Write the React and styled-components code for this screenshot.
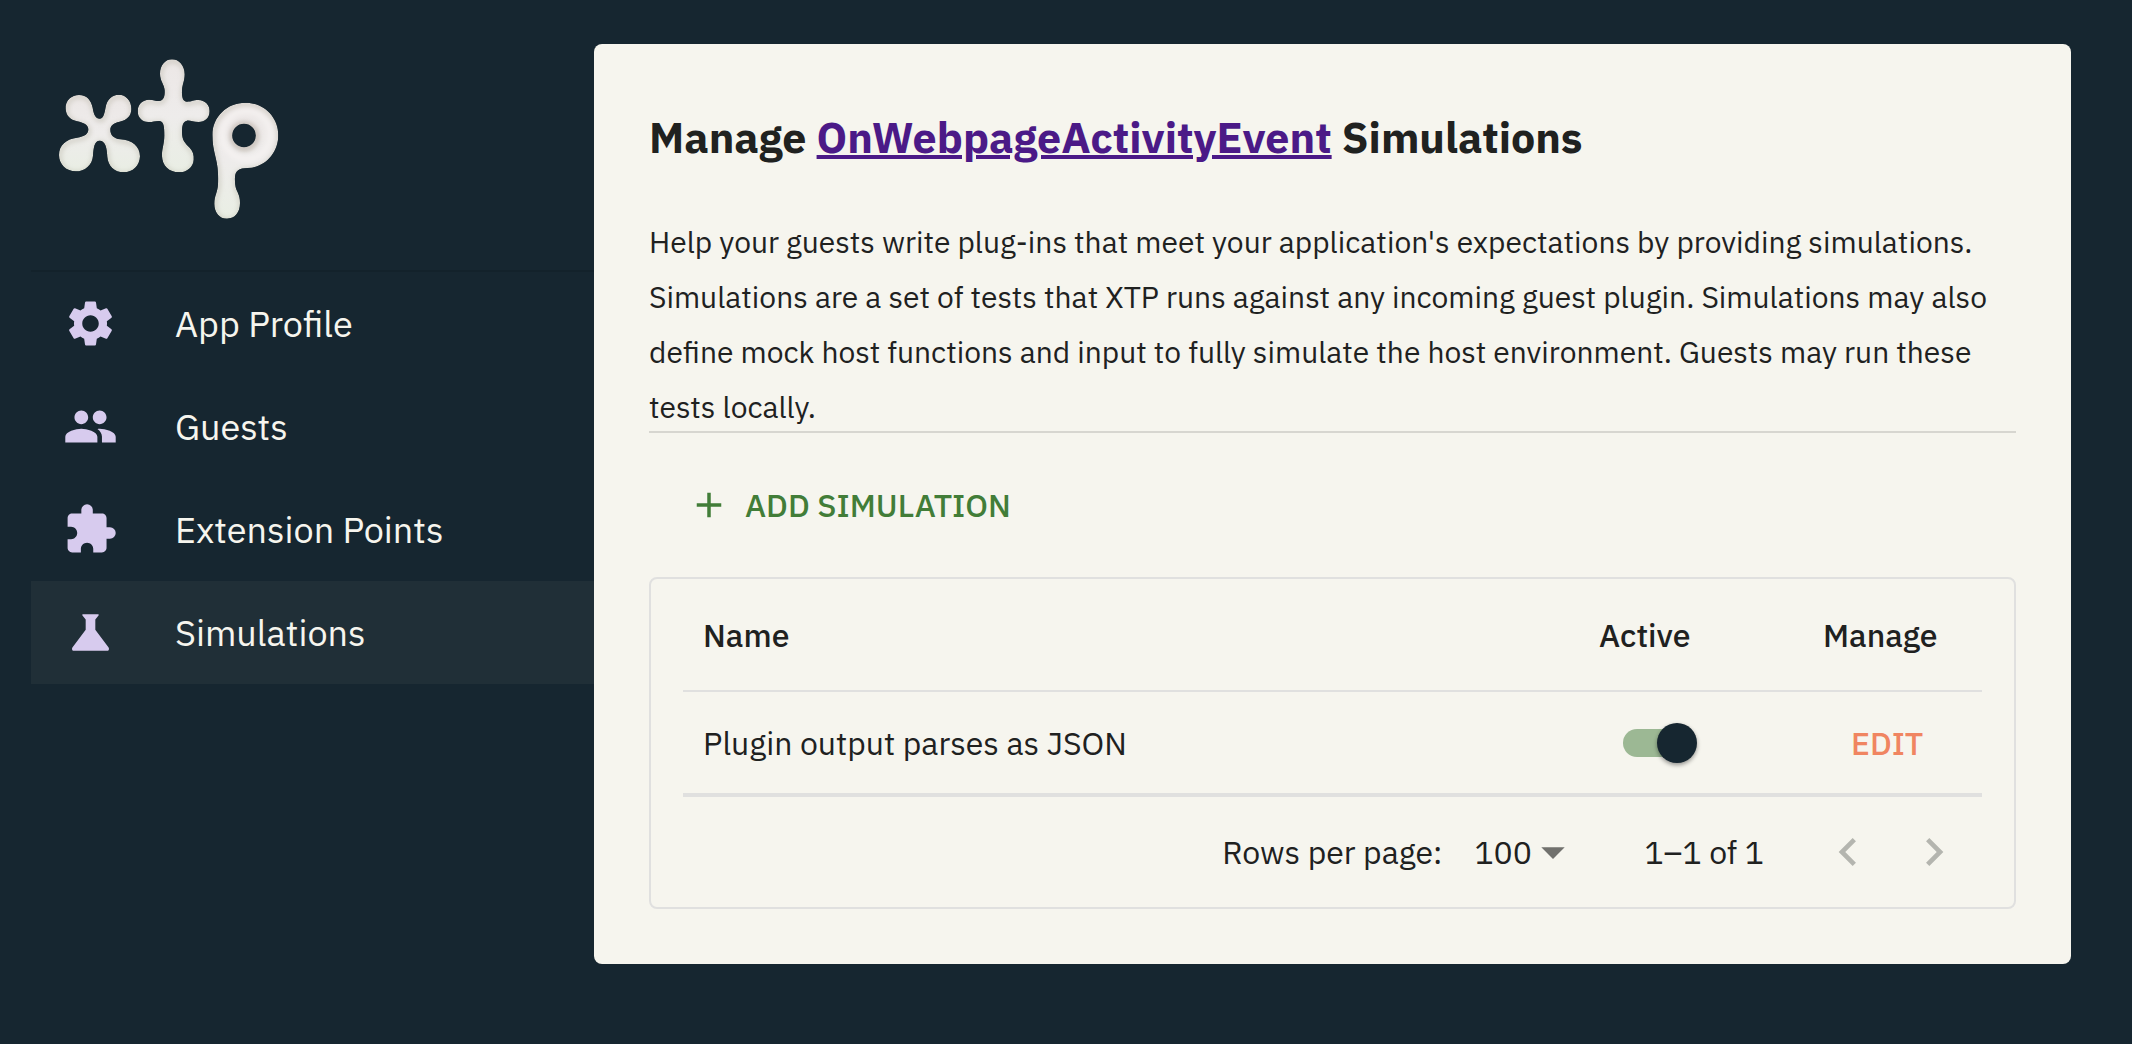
import { useState } from "react";
import styled, { createGlobalStyle } from "styled-components";
import {
  MdAdd,
  MdArrowDropDown,
  MdChevronLeft,
  MdChevronRight,
  MdExtension,
  MdPeople,
  MdSettings,
} from "react-icons/md";

const menu = [
  { label: "App Profile", icon: MdSettings },
  { label: "Guests", icon: MdPeople },
  { label: "Extension Points", icon: MdExtension },
  { label: "Simulations", icon: FlaskIcon, active: true },
];

const simulations = [{ id: 1, name: "Plugin output parses as JSON" }];

export default function App() {
  const [enabled, setEnabled] = useState({ 1: true });

  const handleToggle = (id) => {
    setEnabled({ ...enabled, [id]: !enabled[id] });
  };

  return (
    <>
      <GlobalStyle />
      <Page>
        <Sidebar>
          <LogoLink href="#home" aria-label="xtp">
            <Logo />
          </LogoLink>
          <Menu>
            {menu.map(({ label, icon: Icon, active }) => (
              <MenuLink key={label} href="#menu" $active={active}>
                <Icon size={55} />
                {label}
              </MenuLink>
            ))}
          </Menu>
        </Sidebar>
        <Panel>
          <Title>
            Manage <a href="#event">OnWebpageActivityEvent</a> Simulations
          </Title>
          <Intro>
            Help your guests write plug-ins that meet your application's
            expectations by providing simulations. Simulations are a set of
            tests that XTP runs against any incoming guest plugin. Simulations
            may also define mock host functions and input to fully simulate the
            host environment. Guests may run these tests locally.
          </Intro>
          <Divider />
          <AddButton type="button">
            <MdAdd size={42} />
            Add Simulation
          </AddButton>
          <TableCard>
            <Table>
              <thead>
                <tr>
                  <HeadCell>Name</HeadCell>
                  <HeadCell $width="224px">Active</HeadCell>
                  <HeadCell $width="179px">Manage</HeadCell>
                </tr>
              </thead>
              <tbody>
                {simulations.map(({ id, name }) => (
                  <tr key={id}>
                    <Cell>{name}</Cell>
                    <Cell>
                      <Switch
                        type="checkbox"
                        role="switch"
                        aria-label={name}
                        checked={enabled[id]}
                        onChange={() => handleToggle(id)}
                      />
                    </Cell>
                    <Cell>
                      <EditButton type="button">Edit</EditButton>
                    </Cell>
                  </tr>
                ))}
              </tbody>
            </Table>
            <Pagination>
              <label htmlFor="rows">Rows per page:</label>
              <SelectBox>
                <select id="rows" defaultValue="100">
                  <option>25</option>
                  <option>50</option>
                  <option>100</option>
                </select>
                <MdArrowDropDown size={56} />
              </SelectBox>
              <Count>1–1 of 1</Count>
              <PageButton type="button" disabled aria-label="Previous page">
                <MdChevronLeft size={56} />
              </PageButton>
              <PageButton type="button" disabled aria-label="Next page">
                <MdChevronRight size={56} />
              </PageButton>
            </Pagination>
          </TableCard>
        </Panel>
      </Page>
    </>
  );
}

function FlaskIcon({ size }) {
  return (
    <svg width={size} height={size} viewBox="0 0 24 24" fill="currentColor">
      <path d="M8.8 4H15.2C15.6 4 15.7 4.3 15.5 4.6L14.1 6.3V10.8L19.9 18.5C20.3 19.2 20 20 19.2 20H4.8C4 20 3.7 19.2 4.1 18.5L9.9 10.8V6.3L8.5 4.6C8.3 4.3 8.4 4 8.8 4Z" />
    </svg>
  );
}

const shapes = [
  "M106 206C104 180 124 164 146 164C170 164 182 180 187 202C190 222 196 235 208 235C220 235 222 220 226 200C230 178 245 163 265 163C287 163 304 182 303 206C303 228 288 240 268 244C250 248 240 256 240 268C240 284 250 294 270 297C305 299 329 318 329 348C328 376 308 396 280 396C252 396 233 376 231 350C230 325 226 301 208 301C192 301 190 322 188 346C186 374 164 393 136 393C108 393 86 372 86 344C86 314 108 296 140 292C162 289 174 282 174 267C173 252 160 248 140 243C120 238 107 226 106 206Z",
  "M425 57C446 57 463 76 463 102C463 122 456 132 455 150C454 172 458 184 470 184C484 184 488 179 504 179C524 179 538 194 538 212C538 232 524 245 505 245C488 245 480 240 470 241C458 243 455 256 455 275C455 300 464 308 478 322C488 332 491 344 490 358C489 380 470 396 446 396C416 396 396 376 395 348C394 326 402 312 402 285C402 258 400 244 388 242C376 241 370 245 354 245C335 245 322 231 322 212C322 193 336 178 356 178C370 178 376 182 386 182C400 182 404 168 403 150C402 132 389 122 389 100C389 76 404 57 425 57Z",
  "M645 187C700 187 744 230 744 284C744 338 704 382 652 383C626 383 615 392 614 410C613 432 616 444 622 456C627 467 629 476 629 488C629 516 614 535 590 535C567 535 552 516 552 490C552 466 562 456 563 432C564 400 563 380 556 352C550 328 546 308 546 284C546 230 590 187 645 187ZM641 250A35 35 0 1 0 641 321A35 35 0 1 0 641 250Z",
];

function Logo() {
  return (
    <svg width="224" height="164" viewBox="80 50 672 492" aria-hidden="true">
      <defs>
        <linearGradient id="body" x1="0" y1="0" x2="0" y2="1">
          <stop offset="0" stopColor="#ece7e6" />
          <stop offset="0.5" stopColor="#eeeceb" />
          <stop offset="1" stopColor="#e9eee4" />
        </linearGradient>
        <filter id="soft" x="-20%" y="-20%" width="140%" height="140%">
          <feGaussianBlur stdDeviation="8" />
        </filter>
        {shapes.map((d, i) => (
          <clipPath id={`shape${i}`} key={i}>
            <path d={d} clipRule="evenodd" />
          </clipPath>
        ))}
      </defs>
      {shapes.map((d, i) => (
        <g clipPath={`url(#shape${i})`} key={i}>
          <path d={d} fill="url(#body)" fillRule="evenodd" />
          <g filter="url(#soft)" fill="none">
            <path
              d={d}
              stroke="#b5b3a3"
              strokeWidth="10"
              opacity="0.6"
              transform="translate(2 5)"
            />
          </g>
          {i === 2 && (
            <g filter="url(#soft)" fill="none">
              <circle cx="641" cy="286" r="37" stroke="#c4bab4" strokeWidth="10" />
              <circle cx="648" cy="284" r="72" stroke="#f6f3f2" strokeWidth="14" />
            </g>
          )}
        </g>
      ))}
    </svg>
  );
}

const GlobalStyle = createGlobalStyle`
  * {
    box-sizing: border-box;
  }

  body {
    margin: 0;
    background: #162630;
    color: #20211f;
    font-family: "IBM Plex Sans", Roboto, sans-serif;
    font-size: 32px;
  }

  button,
  select {
    padding: 0;
    border: 0;
    background: none;
    color: inherit;
    font: inherit;
  }
`;

const Page = styled.div`
  display: flex;
  align-items: flex-start;
  min-height: 100vh;
  padding: 44px 61px 44px 31px;
`;

const Sidebar = styled.aside`
  flex: 0 0 563px;
`;

const LogoLink = styled.a`
  display: block;
  height: 228px;
  padding: 13px 26px;
  border-bottom: 2px solid #13222b;
`;

const Menu = styled.nav`
  display: flex;
  flex-direction: column;
`;

const MenuLink = styled.a`
  display: flex;
  align-items: center;
  gap: 57px;
  height: 103px;
  padding-left: 32px;
  background: ${({ $active }) => ($active ? "#202f37" : "transparent")};
  color: #f6f5ee;
  font-size: 36px;
  text-decoration: none;

  svg {
    color: #d7cbee;
  }
`;

const Panel = styled.main`
  flex: 1;
  min-width: 0;
  padding: 55px;
  border-radius: 8px;
  background: #f6f5ee;
`;

const Title = styled.h1`
  margin: 0 0 39px;
  font-size: 43px;
  font-weight: 700;
  line-height: 76px;

  a {
    color: #4b1a87;
    text-decoration-thickness: 4px;
  }
`;

const Intro = styled.p`
  margin: 0;
  font-size: 30px;
  line-height: 55px;
`;

const Divider = styled.hr`
  margin: -3px 0 0;
  border: 0;
  border-top: 2px solid #d7d6d0;
`;

const AddButton = styled.button`
  display: flex;
  align-items: center;
  gap: 15px;
  height: 72px;
  margin: 36px 0;
  padding: 0 39px;
  color: #427d38;
  font-weight: 500;
  text-transform: uppercase;
  cursor: pointer;
`;

const TableCard = styled.section`
  padding: 0 32px;
  border: 2px solid #e0e0df;
  border-radius: 8px;
`;

const Table = styled.table`
  width: 100%;
  border-collapse: collapse;
  table-layout: fixed;
  border-bottom: 4px solid #e0e0df;
`;

const HeadCell = styled.th`
  width: ${({ $width }) => $width || "auto"};
  height: 112px;
  padding: 0 20px;
  border-bottom: 2px solid #e0e0df;
  font-weight: 500;
  text-align: left;
`;

const Cell = styled.td`
  height: 104px;
  padding: 0 20px;
`;

const Switch = styled.input`
  appearance: none;
  display: flex;
  align-items: center;
  width: 68px;
  height: 28px;
  margin: 0 24px;
  border-radius: 14px;
  background: ${({ checked }) => (checked ? "#9cb894" : "#a5a5a0")};
  cursor: pointer;

  &::before {
    content: "";
    flex: none;
    width: 40px;
    height: 40px;
    margin-left: ${({ checked }) => (checked ? "34px" : "-6px")};
    border-radius: 50%;
    background: #162630;
    box-shadow: 0 2px 4px rgba(0, 0, 0, 0.4);
  }
`;

const EditButton = styled.button`
  padding: 0 28px;
  color: #f08561;
  font-weight: 500;
  text-transform: uppercase;
  cursor: pointer;
`;

const Pagination = styled.div`
  display: flex;
  align-items: center;
  justify-content: flex-end;
  height: 110px;
  padding-right: 5px;
`;

const SelectBox = styled.div`
  display: flex;
  align-items: center;
  margin-left: 32px;

  select {
    appearance: none;
    width: 107px;
    margin-right: -56px;
    line-height: 40px;
  }

  svg {
    color: #71716d;
    pointer-events: none;
  }
`;

const Count = styled.span`
  margin: 0 41px 0 63px;
`;

const PageButton = styled.button`
  display: flex;
  padding: 15px;
  color: #b4b5af;
`;
